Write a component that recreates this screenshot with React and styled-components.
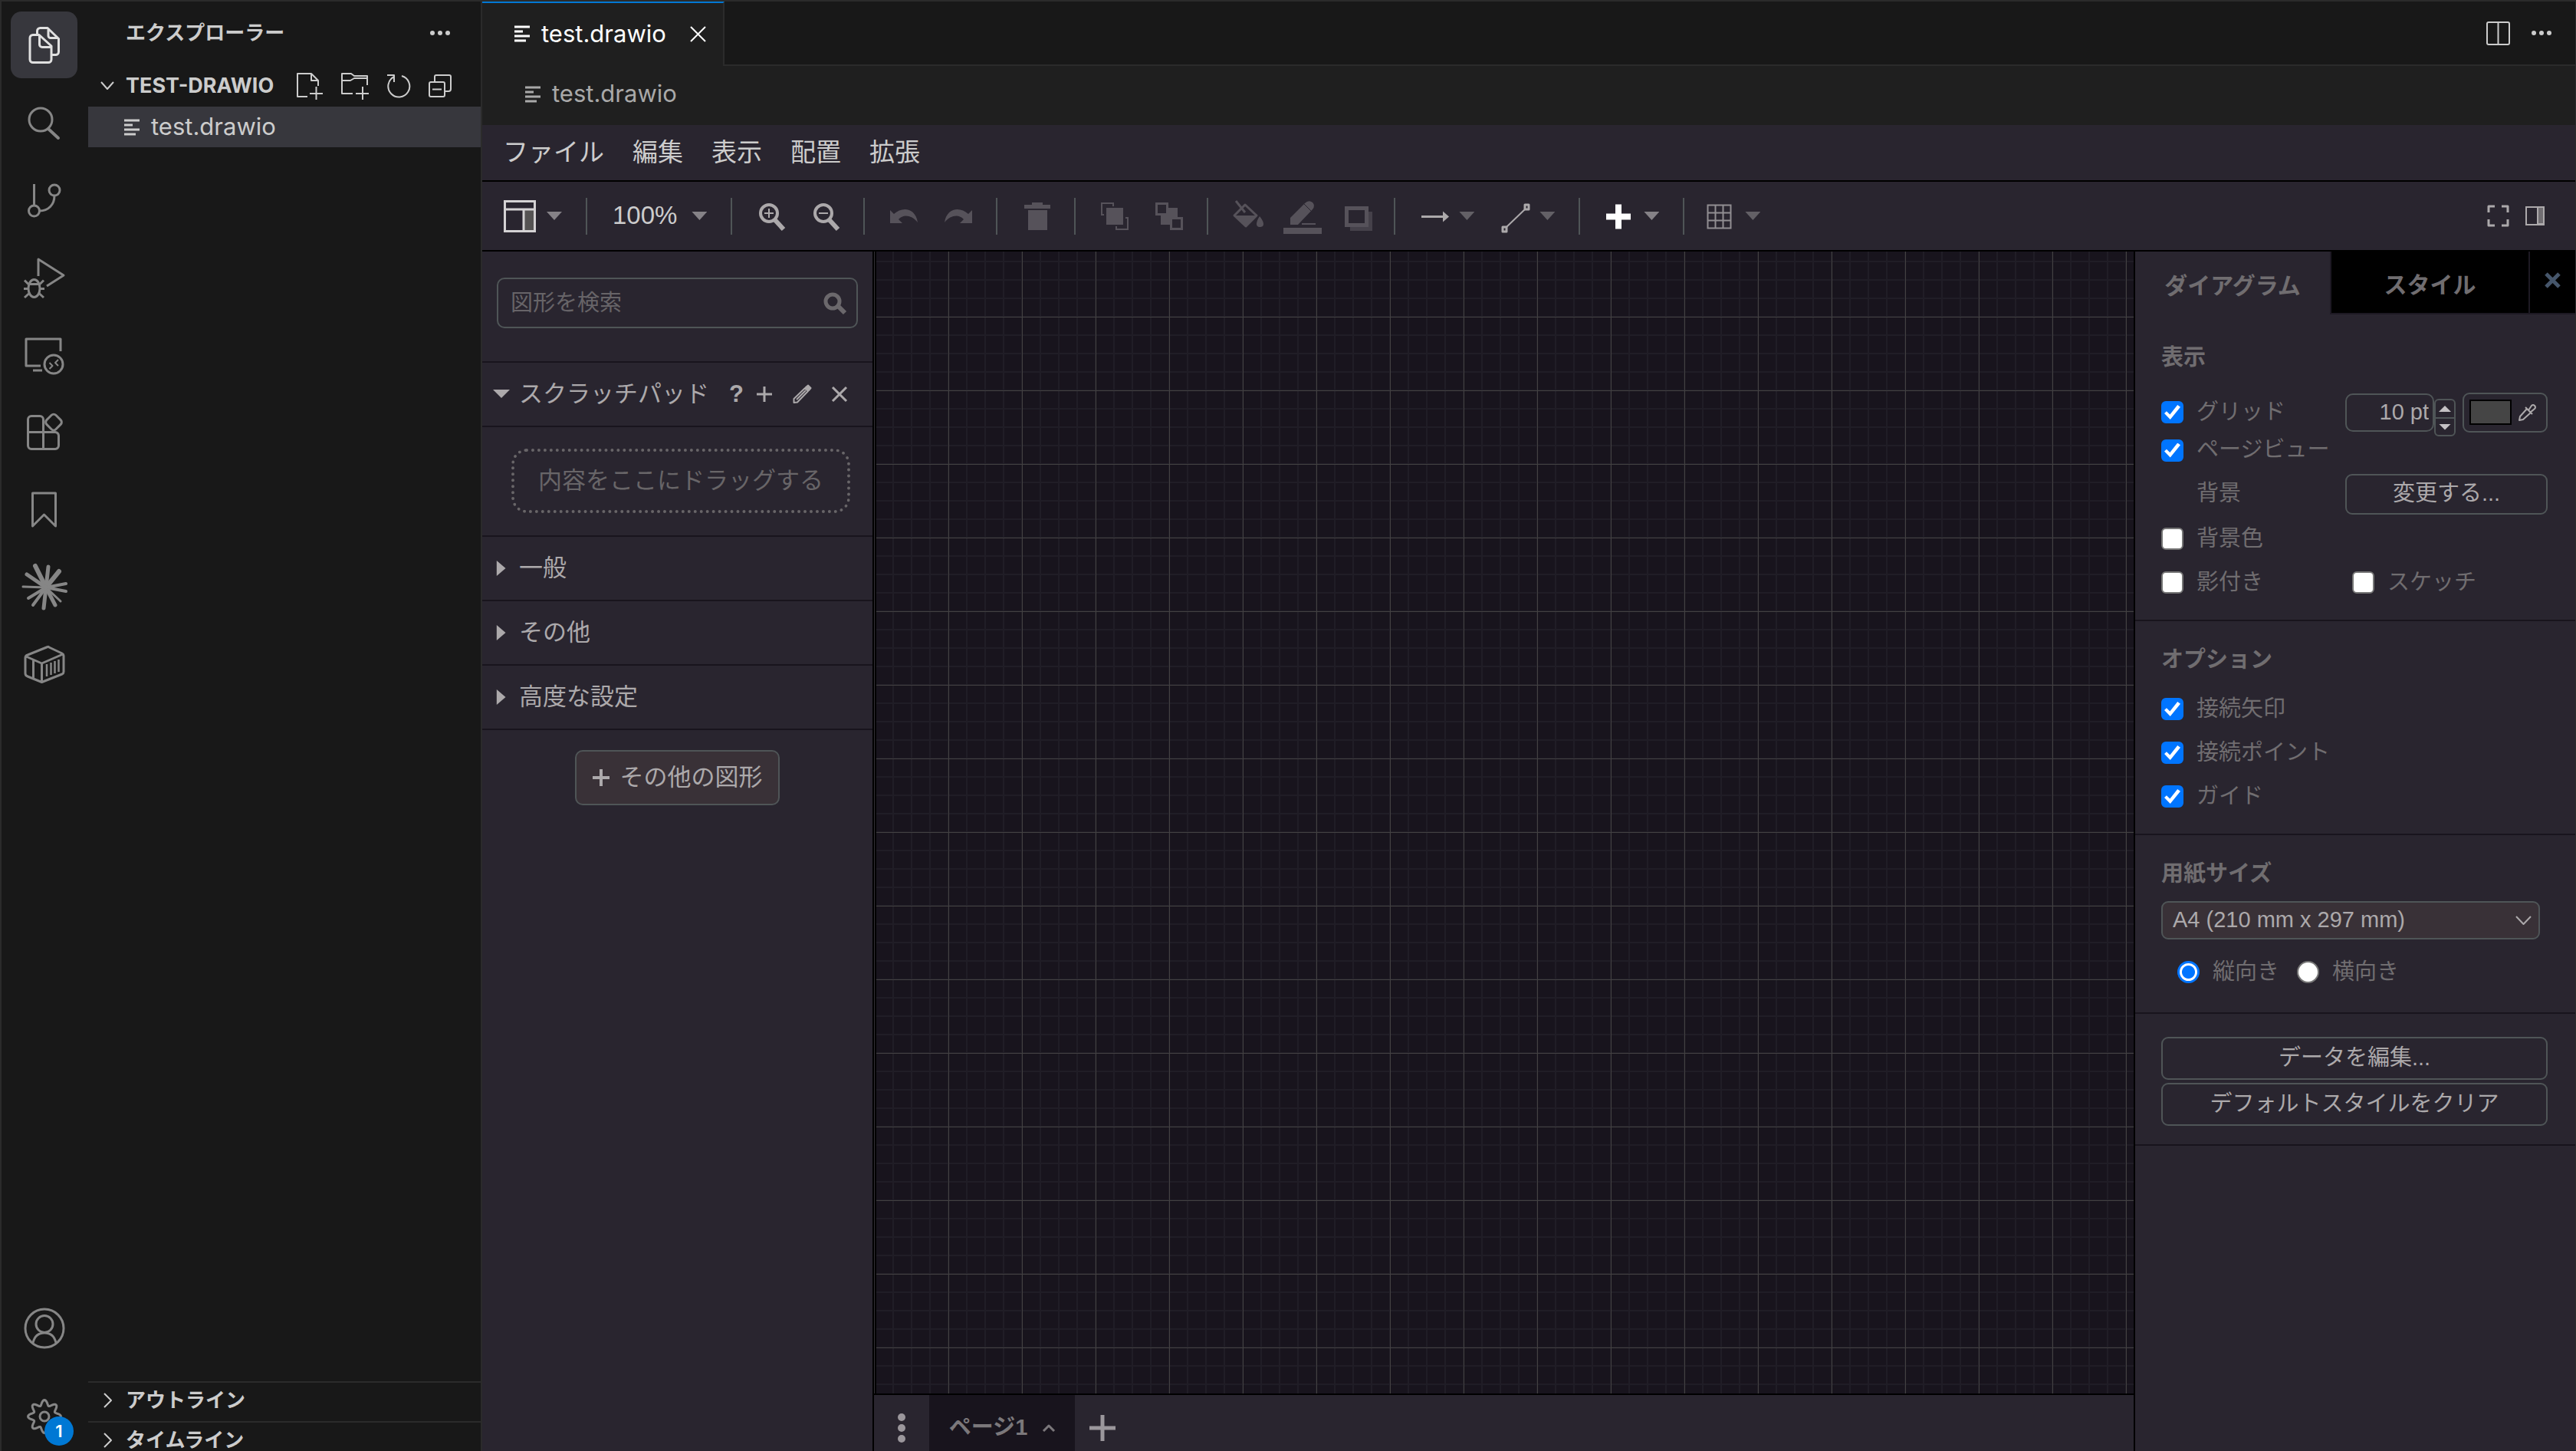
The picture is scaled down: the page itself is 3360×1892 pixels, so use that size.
import React from 'react';
import styled, { createGlobalStyle, css } from 'styled-components';

const GlobalStyle = createGlobalStyle`
  *, *::before, *::after {
    box-sizing: border-box;
  }

  body {
    margin: 0;
    background: #181818;
  }

  button, input, select {
    font: inherit;
    color: inherit;
    margin: 0;
  }

  button {
    padding: 0;
    border: 0;
    background: none;
  }
`;

const codeFont = `Inter, 'Noto Sans CJK JP', sans-serif`;
const drawFont = `'Liberation Sans', 'Noto Sans CJK JP', sans-serif`;

const colors = {
  line: '#2b2b2b',
  dark: '#181818',
  editor: '#1f1f1f',
  selected: '#37373d',
  panel: '#29252f',
  canvas: '#18141d',
  raised: '#393137',
  outline: '#4f5557',
  text: '#cccccc',
  drawText: '#aca9ab',
  muted: '#706d70',
  disabled: '#56525a',
};

const Window = styled.div`
  display: flex;
  height: 100vh;
  overflow: hidden;
  border: solid ${colors.line};
  border-width: 2px 1px 0 2px;
  background: ${colors.dark};
  color: ${colors.text};
  font-family: ${codeFont};
  line-height: 1.3;
`;

const Svg = styled.svg`
  display: block;
  flex: none;
  overflow: visible;
  fill: none;
  stroke: currentColor;
  stroke-width: ${(p) => p.$stroke || 3};
  stroke-linejoin: round;
`;

const Icon = ({ w, h = w, stroke, children }) => (
  <Svg width={w} height={h} viewBox={`0 0 ${w} ${h}`} $stroke={stroke} aria-hidden="true">
    {children}
  </Svg>
);

/* ---------- activity bar ---------- */

const ActivityBar = styled.nav`
  display: flex;
  flex-direction: column;
  flex: none;
  gap: 14px;
  width: 113px;
  padding: 13px 14px 2px 12px;
`;

const ActivityButton = styled.button`
  position: relative;
  display: grid;
  place-items: center;
  flex: none;
  height: 87px;
  border-radius: 14px;
  color: ${(p) => (p.$active ? '#e0e0e0' : '#868686')};
  background: ${(p) => (p.$active ? colors.selected : 'none')};
`;

const ActivityBottom = styled.div`
  display: flex;
  flex-direction: column;
  gap: 28px;
  margin-top: auto;
`;

const Badge = styled.span`
  position: absolute;
  right: 5px;
  bottom: 5px;
  width: 38px;
  height: 38px;
  border-radius: 50%;
  background: #0078d4;
  color: #ffffff;
  font-size: 22px;
  font-weight: 600;
  line-height: 38px;
  text-align: center;
`;

const rays = [
  [-14, -28, 6], [3, -27, 5], [17, -21, 6], [26, -5, 4], [26, 5, 4], [19, 18, 3],
  [12, 23, 5], [-3, 27, 5], [-17, 23, 4], [-23, 14, 4], [-30, -1, 3], [-25, -17, 5],
];

const gearPoints = Array.from({ length: 96 }, (_, i) => {
  const a = (i / 96) * Math.PI * 2;
  const r = 18 + 3.5 * Math.cos(8 * a);
  return `${(27 + r * Math.sin(a)).toFixed(2)},${(27 - r * Math.cos(a)).toFixed(2)}`;
}).join(' ');

const activities = [
  {
    label: 'エクスプローラー',
    icon: (
      <>
        <path d="M12 13.500H20L36 28V45.500a4 4 0 0 1-4 4H12a4 4 0 0 1-4-4V17.500a4 4 0 0 1 4-4zM20.500 14v12a3.500 3.500 0 0 0 3.500 3.500h12" />
        <path d="M17.500 13V8.500a4 4 0 0 1 4-4H31L45.500 18.500V35.500a4 4 0 0 1-4 4H37M32 5v9.500a3 3 0 0 0 3 3h10" />
      </>
    ),
  },
  {
    label: '検索',
    icon: (
      <>
        <circle cx="22" cy="23" r="15" />
        <path d="M32 35l13 12" strokeWidth="4" strokeLinecap="round" />
      </>
    ),
  },
  {
    label: 'ソース管理',
    icon: (
      <>
        <path d="M13.500 6v28M40 21c0 12-8 20-19.500 20" />
        <circle cx="13.500" cy="41" r="7" />
        <circle cx="40" cy="14" r="7" />
      </>
    ),
  },
  {
    label: '実行とデバッグ',
    icon: (
      <>
        <path d="M19 25V3L52 24 30 38" />
        <ellipse cx="13.500" cy="41" rx="7.500" ry="11.500" />
        <path d="M6 35.500h15M0 41.500h6M21 41.500h6M1 30.500l5 5M26 30.500l-5 5M1 53l6-5.500M26 53l-6-5.500" />
      </>
    ),
  },
  {
    label: 'リモート エクスプローラー',
    icon: (
      <>
        <path d="M22 41H3V6h45v16M12 47h12" />
        <circle cx="39" cy="39" r="12" />
        <path d="M33.500 37l4 4-4 4M45 33l-4 4 4 4" strokeWidth="2" />
      </>
    ),
  },
  {
    label: '拡張機能',
    icon: (
      <>
        <path d="M5.500 26.500V10a4.500 4.500 0 0 1 4.500-4.500h11a4.500 4.500 0 0 1 4.500 4.500v38.500H10a4.500 4.500 0 0 1-4.500-4.500zM5.500 26.500H41a4.500 4.500 0 0 1 4.500 4.500v13a4.500 4.500 0 0 1-4.500 4.500H25.500" />
        <rect x="30.500" y="5" width="17" height="17" rx="4" transform="rotate(45 39 13.500)" />
      </>
    ),
  },
  { label: 'ブックマーク', icon: <path d="M11.500 5h30v43L26.500 33l-15 15z" /> },
  {
    label: 'Claude',
    icon: rays.map(([x, y, width]) => (
      <path
        key={`${x}${y}`}
        d={`M29 27l${x} ${y}`}
        strokeWidth={width}
        strokeLinecap="round"
      />
    )),
  },
  {
    label: 'コンテナー',
    icon: (
      <>
        <path d="M31 3.500L5 14q-3 1-3 4v20q0 3 3 4l18.500 7.500L50 39q2-1 2-3V15q0-2-2-3L33 4q-1-1-2-.500zM3 16l20.500 9L51 13M23.500 25v24M12.500 20v25" />
        <path d="M30 26v16M35.500 24v16M40.500 22v16M45.500 20v16" strokeWidth="2.500" />
      </>
    ),
  },
];

/* ---------- explorer ---------- */

const Explorer = styled.aside`
  display: flex;
  flex-direction: column;
  flex: none;
  width: 514px;
  border-right: 2px solid ${colors.line};
  font-size: 26px;
  font-weight: 700;
`;

const ExplorerHeader = styled.header`
  display: flex;
  align-items: center;
  justify-content: space-between;
  height: 82px;
  padding: 0 40px 0 49px;
`;

const FolderRow = styled.div`
  display: flex;
  align-items: center;
  gap: 14px;
  height: 55px;
  padding: 0 38px 0 15px;
  font-size: 27px;
`;

const FolderActions = styled.div`
  display: flex;
  gap: 24px;
  margin-left: auto;
`;

const FileRow = styled.div`
  display: flex;
  align-items: center;
  gap: 15px;
  height: 53px;
  padding-left: 47px;
  background: ${colors.selected};
  font-size: 31px;
  font-weight: 400;
`;

const Collapsed = styled.div`
  display: flex;
  align-items: center;
  gap: 14px;
  height: 52px;
  padding: 0 0 4px 15px;
  border-top: 2px solid ${colors.line};
  line-height: 1;
`;

const CollapsedList = styled.div`
  height: 91px;
  margin-top: auto;
  overflow: hidden;
`;

const FileIcon = () => (
  <Icon w={20} h={22}>
    <path d="M0 2h20M0 8h11M0 14h20M0 20h15" />
  </Icon>
);

const Dots = () => (
  <Icon w={26} h={6}>
    <g fill="currentColor" stroke="none">
      <circle cx="3" cy="3" r="3" />
      <circle cx="13" cy="3" r="3" />
      <circle cx="23" cy="3" r="3" />
    </g>
  </Icon>
);

/* ---------- editor ---------- */

const Editor = styled.main`
  display: flex;
  flex-direction: column;
  flex: 1;
  min-width: 0;
`;

const TabBar = styled.div`
  display: flex;
  height: 84px;
  flex: none;
  font-size: 31px;
`;

const Tab = styled.div`
  display: flex;
  align-items: center;
  width: 316px;
  gap: 15px;
  padding: 0 22px 2px 42px;
  border-top: 2px solid #0078d4;
  border-right: 2px solid ${colors.line};
  background: ${colors.editor};
  color: #ffffff;

  button {
    margin-left: auto;
  }
`;

const TabActions = styled.div`
  display: flex;
  flex: 1;
  align-items: center;
  justify-content: flex-end;
  gap: 28px;
  padding-right: 31px;
  border-bottom: 2px solid ${colors.line};
`;

const Breadcrumb = styled.div`
  display: flex;
  align-items: center;
  gap: 15px;
  height: 77px;
  flex: none;
  padding: 0 56px 4px;
  background: ${colors.editor};
  color: #a9a9a9;
  font-size: 31px;
`;

/* ---------- draw.io ---------- */

const MenuBar = styled.nav`
  display: flex;
  align-items: center;
  gap: 37px;
  height: 74px;
  flex: none;
  padding-left: 27px;
  border-bottom: 2px solid #000000;
  background: ${colors.panel};
  font-family: ${drawFont};
  font-size: 33px;
`;

const Toolbar = styled.div`
  display: flex;
  align-items: center;
  height: 91px;
  flex: none;
  padding: 0 40px 0 28px;
  border-bottom: 2px solid #000000;
  background: ${colors.panel};
  font-family: ${drawFont};
  font-size: 33px;
`;

const ToolGroup = styled.div`
  display: flex;
  align-items: center;
  gap: 35px;
  height: 48px;
  padding: 0 31px 0 33px;
  border-right: 2px solid ${colors.outline};

  &:first-child {
    padding-left: 0;
  }

  &:nth-last-child(2) {
    padding-left: 29px;
    border-right: 0;
  }
`;

const ToolButton = styled.button`
  display: flex;
  align-items: center;
  gap: ${(p) => (p.$wide ? 19 : 14)}px;
  color: ${(p) => p.$color || '#aca9ab'};
`;

const Caret = styled.span`
  width: 20px;
  height: 11px;
  background: ${(p) => (p.$bright ? '#858287' : '#636066')};
  clip-path: polygon(0 0, 100% 0, 50% 100%);
`;

const ToolbarEnd = styled.div`
  display: flex;
  align-items: center;
  gap: 21px;
  margin-left: auto;
`;

const ToolIcon = ({ children, stroke }) => (
  <Icon w={36} h={40} stroke={stroke}>
    {children}
  </Icon>
);

const Workspace = styled.div`
  display: flex;
  flex: 1;
  min-height: 0;
  background: ${colors.panel};
  color: ${colors.drawText};
  font-family: ${drawFont};
`;

const ShapePanel = styled.aside`
  flex: none;
  width: 509px;
  font-size: 31px;
`;

const SearchArea = styled.div`
  height: 143px;
  padding: 34px 19px 0;
`;

const SearchBox = styled.label`
  display: flex;
  align-items: center;
  height: 66px;
  padding: 0 14px 0 16px;
  border: 2px solid ${colors.outline};
  border-radius: 10px;
  color: #6b686c;

  input {
    flex: 1;
    min-width: 0;
    padding: 0;
    border: 0;
    outline: 0;
    background: none;
    font-size: 29px;
    line-height: normal;
  }

  input::placeholder {
    color: #676468;
  }
`;

const ShapeRow = styled.div`
  display: flex;
  align-items: center;
  height: 84px;
  padding: 0 32px 0 14px;
  border-top: 2px solid ${colors.canvas};
`;

const ShapeTitle = styled.button`
  display: flex;
  align-items: center;
  gap: 12px;
`;

const Disclosure = styled.span`
  width: 22px;
  height: 20px;
  background: ${colors.drawText};
  clip-path: ${(p) =>
    p.$open ? 'polygon(0 20%, 100% 20%, 50% 75%)' : 'polygon(22% 0, 75% 50%, 22% 100%)'};
`;

const ScratchActions = styled.div`
  display: flex;
  align-items: center;
  gap: 26px;
  margin-left: 16px;
`;

const HelpButton = styled.button`
  margin-left: auto;
  font-size: 31px;
  font-weight: 700;
`;

const DropArea = styled.div`
  height: 143px;
  padding: 28px 29px 29px 38px;
  border-top: 2px solid ${colors.canvas};
`;

const DropTarget = styled.div`
  height: 84px;
  border: 4px dotted #686568;
  border-radius: 20px;
  color: #686568;
  line-height: 76px;
  text-align: center;
`;

const MoreArea = styled.div`
  display: flex;
  justify-content: center;
  padding-top: 26px;
  border-top: 2px solid ${colors.canvas};
`;

const MoreButton = styled.button`
  display: flex;
  align-items: center;
  justify-content: center;
  gap: 14px;
  width: 267px;
  height: 72px;
  border: 2px solid ${colors.outline};
  border-radius: 10px;
  background: ${colors.raised};
`;

const CanvasColumn = styled.section`
  display: flex;
  flex: 1;
  flex-direction: column;
  min-width: 0;
  border: solid #000000;
  border-width: 0 2px;
`;

const CanvasFrame = styled.div`
  display: flex;
  flex: 1;
  border-left: 1px solid #333036;
`;

const Canvas = styled.div`
  flex: 1;
  border-left: 2px solid #000000;
  background-color: ${colors.canvas};
  background-image:
    linear-gradient(90deg, #434142 1px, transparent 1px),
    linear-gradient(#434142 1px, transparent 1px),
    linear-gradient(90deg, #201d26 2px, transparent 2px),
    linear-gradient(#201d26 2px, transparent 2px);
  background-size: 96px 96px, 96px 96px, 24px 24px, 24px 24px;
  background-position: 94px 0, 0 85px, 21px 0, 0 12px;
`;

const PageBar = styled.footer`
  display: flex;
  height: 75px;
  flex: none;
  border-top: 2px solid #000000;
`;

const PageBarButton = styled.button`
  display: grid;
  place-items: center;
  width: 72px;
  padding-top: 12px;
  color: #9b979c;
`;

const PageTab = styled.button`
  display: flex;
  align-items: center;
  justify-content: center;
  gap: 20px;
  width: 190px;
  padding-top: 12px;
  background: ${colors.canvas};
  color: #7b787b;
  font-size: 29px;
  font-weight: 700;
`;

/* ---------- format panel ---------- */

const FormatPanel = styled.aside`
  flex: none;
  width: 574px;
  color: ${colors.muted};
  font-size: 29px;
`;

const FormatTabs = styled.div`
  display: grid;
  grid-template-columns: 254px 1fr 61px;
  height: 82px;
  font-size: 30px;
`;

const FormatTab = styled.button`
  display: grid;
  place-items: center;
  padding-top: 6px;
  font-weight: 700;

  ${(p) =>
    p.$inactive &&
    css`
      border: solid #1d1923;
      border-width: 0 0 2px 2px;
      background: #000000;
    `}
`;

const CloseTab = styled(FormatTab)`
  padding-top: 0;
  padding-bottom: 6px;
  color: #46566b;
`;

const Heading = styled.h2`
  margin: 0 0 16px;
  font-size: 29px;
  font-weight: 700;
  line-height: 40px;
`;

const Section = styled.section`
  padding: 30px 36px ${(p) => (p.$roomy ? 24 : 20)}px 34px;
  border-bottom: 2px solid ${colors.canvas};

  ${(p) =>
    p.$first &&
    css`
      padding-top: 36px;

      ${Heading} {
        margin-bottom: 20px;
      }
    `}
`;

const Field = styled.div`
  display: grid;
  grid-template-columns: 240px 1fr;
  align-items: center;
  height: ${(p) => p.$height || 57}px;
`;

const Choice = styled.label`
  display: flex;
  align-items: center;
  gap: 17px;
  white-space: nowrap;
  padding-left: ${(p) => (p.$indent ? 9 : 0)}px;
`;

const PlainLabel = styled.span`
  padding-left: 46px;
`;

const Checkbox = styled.input.attrs({ type: 'checkbox' })`
  display: grid;
  place-items: center;
  flex: none;
  width: 29px;
  height: 29px;
  appearance: none;
  border: 2px solid #767676;
  border-radius: 6px;
  background: #ffffff;

  &:checked {
    border-color: #0075ff;
    background: #0075ff;
  }

  &:checked::before {
    content: '';
    width: 21px;
    height: 19px;
    background: #ffffff;
    clip-path: polygon(0 58%, 14% 44%, 35% 66%, 82% 0, 100% 14%, 37% 100%);
  }
`;

const Radio = styled.input.attrs({ type: 'radio' })`
  flex: none;
  width: 29px;
  height: 29px;
  appearance: none;
  border: 2px solid #767676;
  border-radius: 50%;
  background: #ffffff;

  &:checked {
    border: 3px solid #0075ff;
    background: radial-gradient(#0075ff 8px, #ffffff 9px);
  }
`;

const GridControls = styled.div`
  display: flex;
  align-items: center;
`;

const SizeInput = styled.input`
  width: 116px;
  height: 50px;
  padding: 0 5px;
  border: 2px solid ${colors.outline};
  border-radius: 10px;
  background: none;
  color: ${colors.drawText};
  text-align: right;
`;

const Stepper = styled.div`
  width: 28px;
  height: 49px;
  margin: 14px 9px 0 0;
  border: 2px solid ${colors.outline};
  border-radius: 6px;

  button {
    display: grid;
    place-items: center;
    width: 100%;
    height: 22px;
  }

  button + button {
    height: 23px;
    border-top: 2px solid ${colors.outline};
  }
`;

const StepArrow = styled.span`
  width: 16px;
  height: 8px;
  background: #c4c1c4;
  clip-path: ${(p) =>
    p.$up ? 'polygon(0 100%, 50% 0, 100% 100%)' : 'polygon(0 0, 100% 0, 50% 100%)'};
`;

const ColorButton = styled.button`
  display: flex;
  align-items: center;
  gap: 9px;
  flex: 1;
  height: 52px;
  padding: 0 7px;
  border: 2px solid ${colors.outline};
  border-radius: 9px;
  color: ${colors.drawText};
`;

const Swatch = styled.span`
  width: 55px;
  height: 33px;
  border: 2px solid #000000;
  background: #454545;
`;

const PanelButton = styled.button`
  display: block;
  width: 100%;
  height: ${(p) => (p.$short ? 53 : 56)}px;
  border: 2px solid ${colors.outline};
  border-radius: 9px;
  color: ${colors.drawText};

  & + & {
    margin-top: 4px;
  }
`;

const SelectBox = styled.div`
  display: grid;
  grid-template-columns: 1fr 21px 9px;
  align-items: center;
  width: 494px;
  height: 50px;
  margin-bottom: 14px;
  border: 2px solid ${colors.outline};
  border-radius: 9px;
  background: ${colors.raised};
  color: ${colors.drawText};

  select {
    grid-area: 1 / 1 / 2 / 4;
    height: 46px;
    padding: 0 13px;
    appearance: none;
    border: 0;
    background: none;
  }

  svg {
    grid-area: 1 / 2;
    pointer-events: none;
  }
`;

const Orientation = styled.div`
  display: flex;
  align-items: center;
  gap: 23px;
  height: 57px;
  padding-left: 21px;
`;

const PencilIcon = () => (
  <Icon w={24} h={24} stroke={2}>
    <path d="M1.500 23v-5L16 4l4 4L6 22.500zM5 19L17 7" />
    <path d="M17 3l3-2.500 3.500 3.500L21 7z" fill="currentColor" />
  </Icon>
);

const options = ['接続矢印', '接続ポイント', 'ガイド'];
const categories = ['一般', 'その他', '高度な設定'];
const menus = ['ファイル', '編集', '表示', '配置', '拡張'];

const ToolbarContent = () => (
  <Toolbar>
    <ToolGroup>
      <ToolButton $color="#d4d2d4" aria-label="レイアウト">
        <Icon w={42}>
          <path d="M27 13h12v26H27z" fill="#555353" stroke="none" />
          <path d="M1.500 1.500h39v39h-39zM1.500 12h39M26 12v28" strokeLinejoin="miter" />
        </Icon>
        <Caret $bright />
      </ToolButton>
    </ToolGroup>
    <ToolGroup>
      <ToolButton $wide $color={colors.text}>
        100%
        <Caret $bright />
      </ToolButton>
    </ToolGroup>
    <ToolGroup>
      <ToolButton aria-label="ズームイン">
        <ToolIcon stroke={4}>
          <circle cx="15" cy="16" r="11" />
          <path d="M23 25l11 12" strokeWidth="6" />
          <path d="M9 16h12M15 10v12" strokeWidth="2" />
        </ToolIcon>
      </ToolButton>
      <ToolButton aria-label="ズームアウト">
        <ToolIcon stroke={4}>
          <circle cx="15" cy="16" r="11" />
          <path d="M23 25l11 12" strokeWidth="6" />
          <path d="M9 16h12" strokeWidth="2" />
        </ToolIcon>
      </ToolButton>
    </ToolGroup>
    <ToolGroup>
      <ToolButton $color={colors.disabled} aria-label="元に戻す">
        <ToolIcon>
          <path
            d="M0 12v17h16l-5-5c6-7 17-6 25 4C33 9 16 7 5 17z"
            fill="currentColor"
            stroke="none"
          />
        </ToolIcon>
      </ToolButton>
      <ToolButton $color={colors.disabled} aria-label="やり直し">
        <ToolIcon>
          <path
            d="M36 12v17H20l5-5c-6-7-17-6-25 4C3 9 20 7 31 17z"
            fill="currentColor"
            stroke="none"
          />
        </ToolIcon>
      </ToolButton>
    </ToolGroup>
    <ToolGroup>
      <ToolButton $color={colors.disabled} aria-label="削除">
        <ToolIcon>
          <path
            d="M12 2h14v3h10v5H2V5h10zM7 12h25v26H7z"
            fill="currentColor"
            stroke="none"
          />
        </ToolIcon>
      </ToolButton>
    </ToolGroup>
    <ToolGroup>
      <ToolButton $color={colors.disabled} aria-label="最前面へ">
        <ToolIcon stroke={2}>
          <path d="M7 9h22v22H7z" fill="currentColor" stroke="none" />
          <path d="M4 18H1V3h15v4M32 22h3v15H20v-4" strokeLinejoin="miter" />
        </ToolIcon>
      </ToolButton>
      <ToolButton $color={colors.disabled} aria-label="最背面へ">
        <ToolIcon>
          <path d="M7 9h22v22H7z" fill="currentColor" stroke="none" />
          <path
            d="M1.500 3.500h14v14h-14zM20.500 22.500h14v14h-14z"
            fill={colors.panel}
            strokeLinejoin="miter"
          />
        </ToolIcon>
      </ToolButton>
    </ToolGroup>
    <ToolGroup>
      <ToolButton $color={colors.disabled} aria-label="塗りつぶし">
        <ToolIcon>
          <path d="M1 19L15 5l15 14-14 14z" />
          <path d="M1 19h30L16 34zM34 20c3 4 5 7 5 10s-2 4-5 4-4-2-4-4 1-6 4-10z" fill="currentColor" stroke="none" />
          <path d="M3 0l12 15" />
        </ToolIcon>
      </ToolButton>
      <ToolButton $color={colors.disabled} aria-label="線の色">
        <ToolIcon>
          <path
            d="M3 31v-9L22 3q5-5 10-1 4 4 0 9L13 31zM18 29h18v2H18zM-6 35h50v8H-6z"
            fill="currentColor"
            stroke="none"
          />
          <path d="M21 4l10 10" stroke={colors.panel} strokeWidth="1" />
        </ToolIcon>
      </ToolButton>
      <ToolButton $color={colors.disabled} aria-label="影">
        <ToolIcon stroke={5}>
          <path d="M10 14h29v25H10z" fill="#45414a" stroke="none" />
          <path d="M5.500 9.500h26v22h-26z" fill={colors.panel} strokeLinejoin="miter" />
        </ToolIcon>
      </ToolButton>
    </ToolGroup>
    <ToolGroup>
      <ToolButton aria-label="接続">
        <ToolIcon>
          <path d="M1 20.500h30" />
          <path d="M29 13.500l8 7-8 7z" fill="currentColor" stroke="none" />
        </ToolIcon>
        <Caret />
      </ToolButton>
      <ToolButton aria-label="ウェイポイント">
        <ToolIcon stroke={2}>
          <path d="M7 34L32 10" />
          <path d="M2 34h5v6H2zM31 5h5v6h-5z" strokeWidth="3" />
        </ToolIcon>
        <Caret />
      </ToolButton>
    </ToolGroup>
    <ToolGroup>
      <ToolButton $color="#ffffff" aria-label="挿入">
        <ToolIcon stroke={8}>
          <path d="M1 20.500h32M17 4.500v32" />
        </ToolIcon>
        <Caret $bright />
      </ToolButton>
    </ToolGroup>
    <ToolGroup>
      <ToolButton $color="#918e92" aria-label="表">
        <ToolIcon stroke={2}>
          <path
            d="M1.500 5.500h30v30h-30zM11.500 5v31M21.500 5v31M1 15.500h31M1 25.500h31"
            strokeLinejoin="miter"
          />
        </ToolIcon>
        <Caret />
      </ToolButton>
    </ToolGroup>
    <ToolbarEnd>
      <ToolButton aria-label="全画面">
        <Icon w={29}>
          <path d="M2 10V2h8M19 2h8v8M27 19v8h-8M10 27H2v-8" />
        </Icon>
      </ToolButton>
      <ToolButton aria-label="書式パネル">
        <Icon w={25} stroke={2}>
          <path d="M16 1h8v22h-8z" fill="#716e72" />
          <path d="M1 1h23v23H1z" strokeLinejoin="miter" />
        </Icon>
      </ToolButton>
    </ToolbarEnd>
  </Toolbar>
);

const Shapes = () => (
  <ShapePanel>
    <SearchArea>
      <SearchBox>
        <input type="text" placeholder="図形を検索" aria-label="図形を検索" />
        <Icon w={29} stroke={5}>
          <circle cx="12" cy="12" r="9" />
          <path d="M18 17l10 10" strokeWidth="6" />
        </Icon>
      </SearchBox>
    </SearchArea>
    <ShapeRow>
      <ShapeTitle>
        <Disclosure $open />
        スクラッチパッド
      </ShapeTitle>
      <HelpButton>?</HelpButton>
      <ScratchActions>
        <button aria-label="追加">
          <Icon w={22}>
            <path d="M1 11h20M11 1v20" />
          </Icon>
        </button>
        <button aria-label="編集">
          <PencilIcon />
        </button>
        <button aria-label="閉じる">
          <Icon w={22}>
            <path d="M2 2l18 18M20 2L2 20" />
          </Icon>
        </button>
      </ScratchActions>
    </ShapeRow>
    <DropArea>
      <DropTarget>内容をここにドラッグする</DropTarget>
    </DropArea>
    {categories.map((name) => (
      <ShapeRow key={name}>
        <ShapeTitle>
          <Disclosure />
          {name}
        </ShapeTitle>
      </ShapeRow>
    ))}
    <MoreArea>
      <MoreButton>
        <Icon w={22} stroke={4}>
          <path d="M0 11h22M11 0v22" />
        </Icon>
        その他の図形
      </MoreButton>
    </MoreArea>
  </ShapePanel>
);

const Format = () => (
  <FormatPanel>
    <FormatTabs>
      <FormatTab>ダイアグラム</FormatTab>
      <FormatTab $inactive>スタイル</FormatTab>
      <CloseTab $inactive aria-label="閉じる">
        <Icon w={21} stroke={5}>
          <path d="M2 2l17 17M19 2L2 19" />
        </Icon>
      </CloseTab>
    </FormatTabs>
    <Section $first>
      <Heading>表示</Heading>
      <Field $height={54}>
        <Choice>
          <Checkbox defaultChecked />
          グリッド
        </Choice>
        <GridControls>
          <SizeInput defaultValue="10 pt" aria-label="グリッドサイズ" />
          <Stepper>
            <button aria-label="増やす">
              <StepArrow $up />
            </button>
            <button aria-label="減らす">
              <StepArrow />
            </button>
          </Stepper>
          <ColorButton aria-label="グリッドの色">
            <Swatch />
            <Icon w={22} stroke={2}>
              <path d="M11 6L2 16l-1 5 5-1 10-9M9 4l9 9M13 8l4-6q2-2 4 0t0 4l-6 5" />
            </Icon>
          </ColorButton>
        </GridControls>
      </Field>
      <Field $height={54}>
        <Choice>
          <Checkbox defaultChecked />
          ページビュー
        </Choice>
      </Field>
      <Field $height={60}>
        <PlainLabel>背景</PlainLabel>
        <PanelButton $short>変更する...</PanelButton>
      </Field>
      <Field>
        <Choice>
          <Checkbox />
          背景色
        </Choice>
      </Field>
      <Field>
        <Choice>
          <Checkbox />
          影付き
        </Choice>
        <Choice $indent>
          <Checkbox />
          スケッチ
        </Choice>
      </Field>
    </Section>
    <Section>
      <Heading>オプション</Heading>
      {options.map((name) => (
        <Field key={name}>
          <Choice>
            <Checkbox defaultChecked />
            {name}
          </Choice>
        </Field>
      ))}
    </Section>
    <Section $roomy>
      <Heading>用紙サイズ</Heading>
      <SelectBox>
        <select aria-label="用紙サイズ">
          <option>A4 (210 mm x 297 mm)</option>
        </select>
        <Icon w={21} h={12} stroke={2}>
          <path d="M1 1l9.500 10L20 1" />
        </Icon>
      </SelectBox>
      <Orientation>
        <Choice>
          <Radio name="orientation" defaultChecked />
          縦向き
        </Choice>
        <Choice>
          <Radio name="orientation" />
          横向き
        </Choice>
      </Orientation>
    </Section>
    <Section $roomy>
      <PanelButton>データを編集...</PanelButton>
      <PanelButton>デフォルトスタイルをクリア</PanelButton>
    </Section>
  </FormatPanel>
);

const App = () => {
  return (
    <>
      <GlobalStyle />
      <Window>
        <ActivityBar>
          {activities.map(({ label, icon }, i) => (
            <ActivityButton key={label} $active={i === 0} aria-label={label}>
              <Icon w={54}>{icon}</Icon>
            </ActivityButton>
          ))}
          <ActivityBottom>
            <ActivityButton aria-label="アカウント">
              <Icon w={54}>
                <circle cx="27" cy="27" r="25" />
                <circle cx="27" cy="21.500" r="11" />
                <path d="M12 46c2-9 8-13 15-13s13 4 15 13" />
              </Icon>
            </ActivityButton>
            <ActivityButton aria-label="管理">
              <Icon w={54}>
                <polygon points={gearPoints} />
                <circle cx="27" cy="27" r="6" />
              </Icon>
              <Badge>1</Badge>
            </ActivityButton>
          </ActivityBottom>
        </ActivityBar>
        <Explorer>
          <ExplorerHeader>
            エクスプローラー
            <Dots />
          </ExplorerHeader>
          <FolderRow>
            <Icon w={20} h={12} stroke={2}>
              <path d="M2 1l8 9 8-9" />
            </Icon>
            TEST-DRAWIO
            <FolderActions>
              <button aria-label="新しいファイル">
                <Icon w={34} stroke={2}>
                  <path d="M14 31H1V1h18l9 9v7M19 1v9h9M17 27h17M25.500 18v17" />
                </Icon>
              </button>
              <button aria-label="新しいフォルダー">
                <Icon w={36} h={34} stroke={2}>
                  <path d="M15 27H1V1h12l4 3h17v12M1 10h11l5-3h17M19 27h17M28 18v17" />
                </Icon>
              </button>
              <button aria-label="更新">
                <Icon w={30} h={34} stroke={2}>
                  <path d="M19 4a14 14 0 1 1-10 1M0 3h9v9" />
                </Icon>
              </button>
              <button aria-label="折りたたむ">
                <Icon w={30} h={32} stroke={2}>
                  <rect x="1" y="11" width="20" height="19" rx="2" />
                  <path d="M8 10V4q0-2 2-2h17q2 0 2 2v16q0 3-3 3h-4M5 20.500h12" />
                </Icon>
              </button>
            </FolderActions>
          </FolderRow>
          <FileRow>
            <FileIcon />
            test.drawio
          </FileRow>
          <CollapsedList>
            {['アウトライン', 'タイムライン'].map((name) => (
              <Collapsed key={name}>
                <Icon w={20} stroke={2}>
                  <path d="M6 1l9 9-9 9" />
                </Icon>
                {name}
              </Collapsed>
            ))}
          </CollapsedList>
        </Explorer>
        <Editor>
          <TabBar>
            <Tab>
              <FileIcon />
              test.drawio
              <button aria-label="閉じる">
                <Icon w={21} stroke={2}>
                  <path d="M1 1l19 19M20 1L1 20" />
                </Icon>
              </button>
            </Tab>
            <TabActions>
              <button aria-label="エディターを分割">
                <Icon w={31} stroke={2}>
                  <rect x="1" y="1" width="29" height="29" rx="2" />
                  <path d="M15.500 1v29" />
                </Icon>
              </button>
              <Dots />
            </TabActions>
          </TabBar>
          <Breadcrumb>
            <FileIcon />
            test.drawio
          </Breadcrumb>
          <MenuBar>
            {menus.map((name) => (
              <button key={name}>{name}</button>
            ))}
          </MenuBar>
          <ToolbarContent />
          <Workspace>
            <Shapes />
            <CanvasColumn>
              <CanvasFrame>
                <Canvas />
              </CanvasFrame>
              <PageBar>
                <PageBarButton aria-label="ページ一覧">
                  <Icon w={10} h={38}>
                    <g fill="currentColor" stroke="none">
                      <circle cx="5" cy="5" r="5" />
                      <circle cx="5" cy="19" r="5" />
                      <circle cx="5" cy="33" r="5" />
                    </g>
                  </Icon>
                </PageBarButton>
                <PageTab>
                  ページ1
                  <Icon w={16} h={10}>
                    <path d="M1 9l7-7 7 7" />
                  </Icon>
                </PageTab>
                <PageBarButton aria-label="ページを追加">
                  <Icon w={34} stroke={5}>
                    <path d="M0 17h34M17 0v34" />
                  </Icon>
                </PageBarButton>
              </PageBar>
            </CanvasColumn>
            <Format />
          </Workspace>
        </Editor>
      </Window>
    </>
  );
};

export default App;
